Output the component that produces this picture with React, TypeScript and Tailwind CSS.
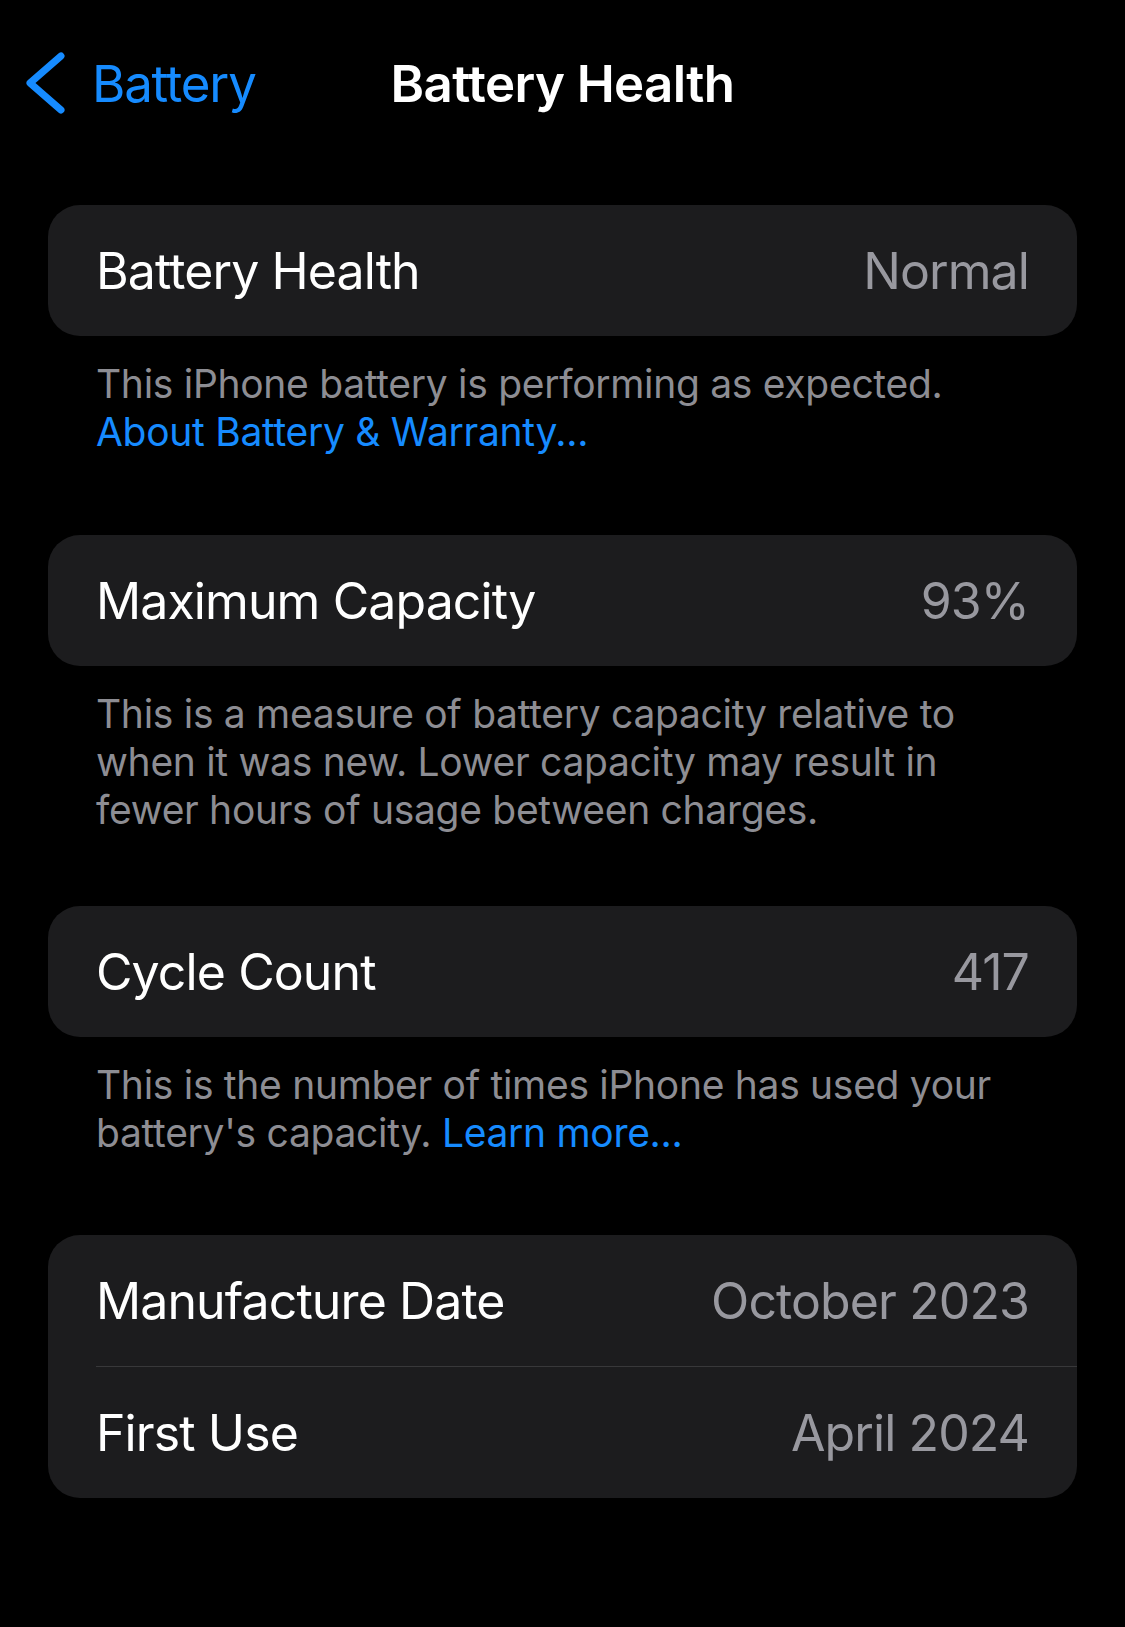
import React from "react";

const FONT = { fontFamily: "Inter, 'Noto Sans', 'Liberation Sans', sans-serif" };

function Row({ label, value }: { label: string; value: string }) {
  return (
    <div className="flex h-[131px] items-center justify-between px-[48px]">
      <span className="text-[50px] leading-none tracking-[-0.9px] text-white">{label}</span>
      <span className="text-[50px] leading-none tracking-[-0.9px] text-[#98989f]">{value}</span>
    </div>
  );
}

function Footer({ children, pb }: { children: React.ReactNode; pb: string }) {
  return (
    <p className={`px-[48px] pt-[24px] text-[39px] leading-[48px] tracking-[-0.3px] text-[#8d8d93] ${pb}`}>
      {children}
    </p>
  );
}

export default function App() {
  return (
    <div className="min-h-[1627px] w-[1125px] bg-black" style={FONT}>
      {/* Nav bar */}
      <div className="grid h-[166px] grid-cols-[1fr_auto_1fr] items-center">
        <div className="flex items-center pl-[26px]">
          <svg width="40" height="62" viewBox="0 0 40 62" fill="none">
            <path
              d="M35 4 L4 31 L35 58"
              stroke="#168bff"
              strokeWidth="7"
              strokeLinecap="round"
              strokeLinejoin="round"
            />
          </svg>
          <span className="ml-[26px] text-[51px] leading-none tracking-[-1.2px] text-[#168bff]">Battery</span>
        </div>
        <h1 className="text-[51px] font-semibold leading-none tracking-[-0.6px] text-white">Battery Health</h1>
        <div />
      </div>

      <div className="mx-[48px] pt-[39px]">
        <div className="overflow-hidden rounded-[32px] bg-[#1c1c1e]">
          <Row label="Battery Health" value="Normal" />
        </div>
        <Footer pb="pb-[79px]">
          This iPhone battery is performing as expected.
          <br />
          <span className="text-[#168bff]">About Battery &amp; Warranty...</span>
        </Footer>

        <div className="overflow-hidden rounded-[32px] bg-[#1c1c1e]">
          <Row label="Maximum Capacity" value="93%" />
        </div>
        <Footer pb="pb-[72px]">
          This is a measure of battery capacity relative to
          <br />
          when it was new. Lower capacity may result in
          <br />
          fewer hours of usage between charges.
        </Footer>

        <div className="overflow-hidden rounded-[32px] bg-[#1c1c1e]">
          <Row label="Cycle Count" value="417" />
        </div>
        <Footer pb="pb-[78px]">
          This is the number of times iPhone has used your
          <br />
          battery's capacity. <span className="text-[#168bff]">Learn more...</span>
        </Footer>

        <div className="overflow-hidden rounded-[32px] bg-[#1c1c1e]">
          <Row label="Manufacture Date" value="October 2023" />
          <div className="ml-[48px] h-px bg-[#38383a]" />
          <Row label="First Use" value="April 2024" />
        </div>
      </div>
    </div>
  );
}
